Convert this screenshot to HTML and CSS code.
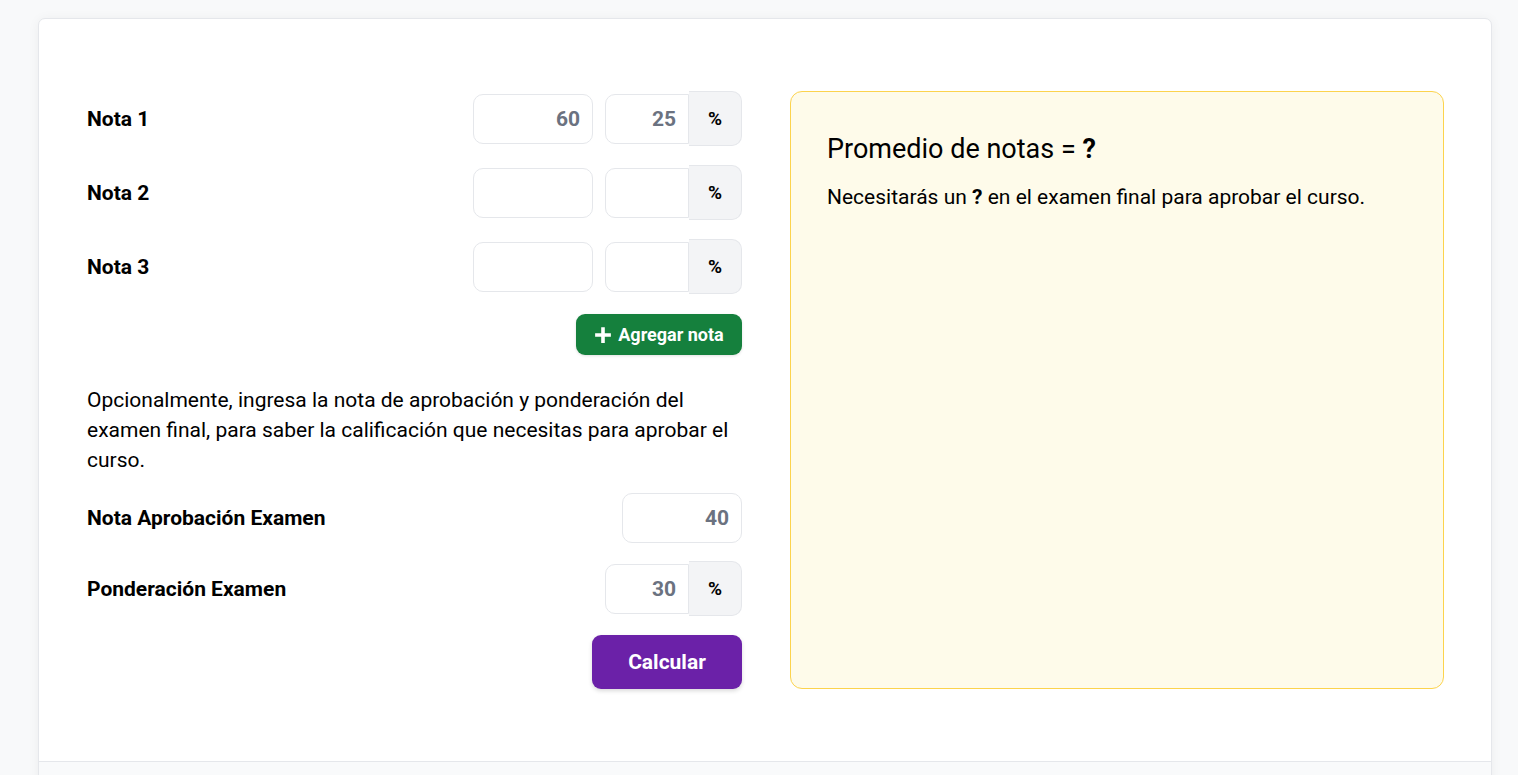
FILE: index.html
```html
<!DOCTYPE html>
<html lang="es">
<head>
<meta charset="utf-8">
<title>Promedio de notas</title>
<link rel="stylesheet" href="styles.css">
</head>
<body>
<div class="card">
  <div class="card-body">
    <div class="form-col">
      <div class="row">
        <label class="label">Nota 1</label>
        <div class="inputs">
          <input class="field w120" type="text" value="60">
          <div class="group">
            <input class="field w84 grouped" type="text" value="25">
            <span class="addon">%</span>
          </div>
        </div>
      </div>
      <div class="row">
        <label class="label">Nota 2</label>
        <div class="inputs">
          <input class="field w120" type="text" value="">
          <div class="group">
            <input class="field w84 grouped" type="text" value="">
            <span class="addon">%</span>
          </div>
        </div>
      </div>
      <div class="row">
        <label class="label">Nota 3</label>
        <div class="inputs">
          <input class="field w120" type="text" value="">
          <div class="group">
            <input class="field w84 grouped" type="text" value="">
            <span class="addon">%</span>
          </div>
        </div>
      </div>
      <div class="add-wrap">
        <button class="btn-add" type="button">
          <svg class="plus" viewBox="0 0 16 16" width="16" height="16" aria-hidden="true"><path d="M6.4 1h3.2v5.4H15v3.2H9.6V15H6.4V9.6H1V6.4h5.4z" fill="#fff"/></svg>
          Agregar nota
        </button>
      </div>
      <p class="note">Opcionalmente, ingresa la nota de aprobación y ponderación del examen final, para saber la calificación que necesitas para aprobar el curso.</p>
      <div class="row row-exam">
        <label class="label">Nota Aprobación Examen</label>
        <div class="inputs">
          <input class="field w120" type="text" value="40">
        </div>
      </div>
      <div class="row row-exam2">
        <label class="label">Ponderación Examen</label>
        <div class="inputs">
          <div class="group">
            <input class="field w84 grouped" type="text" value="30">
            <span class="addon">%</span>
          </div>
        </div>
      </div>
      <div class="calc-wrap">
        <button class="btn-calc" type="button">Calcular</button>
      </div>
    </div>
    <div class="result">
      <h2 class="result-title">Promedio de notas = <strong>?</strong></h2>
      <p class="result-text">Necesitarás un <strong>?</strong> en el examen final para aprobar el curso.</p>
    </div>
  </div>
  <div class="card-footer"></div>
</div>
</body>
</html>
```
FILE: styles.css
```css
* { box-sizing: border-box; }
html, body { margin: 0; padding: 0; }
body {
  background: #f8f9fa;
  font-family: Roboto, "Liberation Sans", Arial, sans-serif;
  color: #000;
  height: 775px;
  overflow: hidden;
}
.card {
  margin: 18px 0 0 38px;
  width: 1454px;
  background: #fff;
  border: 1px solid #e5e7eb;
  border-radius: 7px;
  box-shadow: 0 1px 12px rgba(0,0,0,0.05);
}
.card-body {
  display: grid;
  grid-template-columns: 655px 654px;
  column-gap: 48px;
  padding: 72px 47px 72px 48px;
}
.form-col { display: flex; flex-direction: column; }
.row {
  display: flex;
  align-items: center;
  justify-content: space-between;
  height: 55px;
  margin-bottom: 19px;
}
.label { font-size: 21px; font-weight: 700; }
.inputs { display: flex; align-items: center; gap: 12px; }
.field {
  height: 50px;
  border: 1px solid #e5e7eb;
  border-radius: 10px;
  background: #fff;
  font-family: inherit;
  font-size: 21px;
  font-weight: 700;
  color: #6b7280;
  text-align: right;
  padding: 0 12px;
  outline: none;
}
.w120 { width: 120px; }
.w84 { width: 84px; }
.group { display: flex; align-items: center; }
.grouped { border-radius: 10px 0 0 10px; }
.addon {
  width: 53px;
  height: 55px;
  display: flex;
  align-items: center;
  justify-content: center;
  background: #f3f4f6;
  border: 1px solid #e5e7eb;
  border-left: none;
  border-radius: 0 10px 10px 0;
  font-size: 19px;
  font-weight: 700;
}
.add-wrap { display: flex; justify-content: flex-end; margin-top: 1px; }
.btn-add {
  display: flex;
  align-items: center;
  gap: 6px;
  height: 41px;
  width: 166px;
  justify-content: center;
  background: #15803d;
  color: #fff;
  border: none;
  border-radius: 9px;
  font-family: inherit;
  font-size: 18px;
  font-weight: 700;
  padding: 0 12px;
  box-shadow: 0 1px 3px rgba(0,0,0,0.12);
}
.plus { width: 18px; height: 18px; }
.note {
  margin: 30px 0 15px 0;
  font-size: 21px;
  line-height: 30px;
}
.row-exam { margin-bottom: 16px; }
.row-exam2 { margin-bottom: 19px; }
.calc-wrap { display: flex; justify-content: flex-end; }
.btn-calc {
  width: 150px;
  height: 54px;
  background: #6b21a8;
  color: #fff;
  border: none;
  border-radius: 9px;
  font-family: inherit;
  font-size: 21px;
  font-weight: 700;
  box-shadow: 0 2px 4px rgba(0,0,0,0.15);
}
.result {
  background: #fefbea;
  border: 1px solid #fcd34d;
  border-radius: 12px;
  padding: 39px 36px;
}
.result-title {
  margin: 0 0 16px 0;
  font-size: 27px;
  font-weight: 400;
  line-height: 36px;
}
.result-title strong { font-weight: 700; }
.result-text {
  margin: 0;
  font-size: 21px;
  line-height: 28px;
}
.card-footer {
  height: 60px;
  background: #f9fafb;
  border-top: 1px solid #e5e7eb;
}
```
